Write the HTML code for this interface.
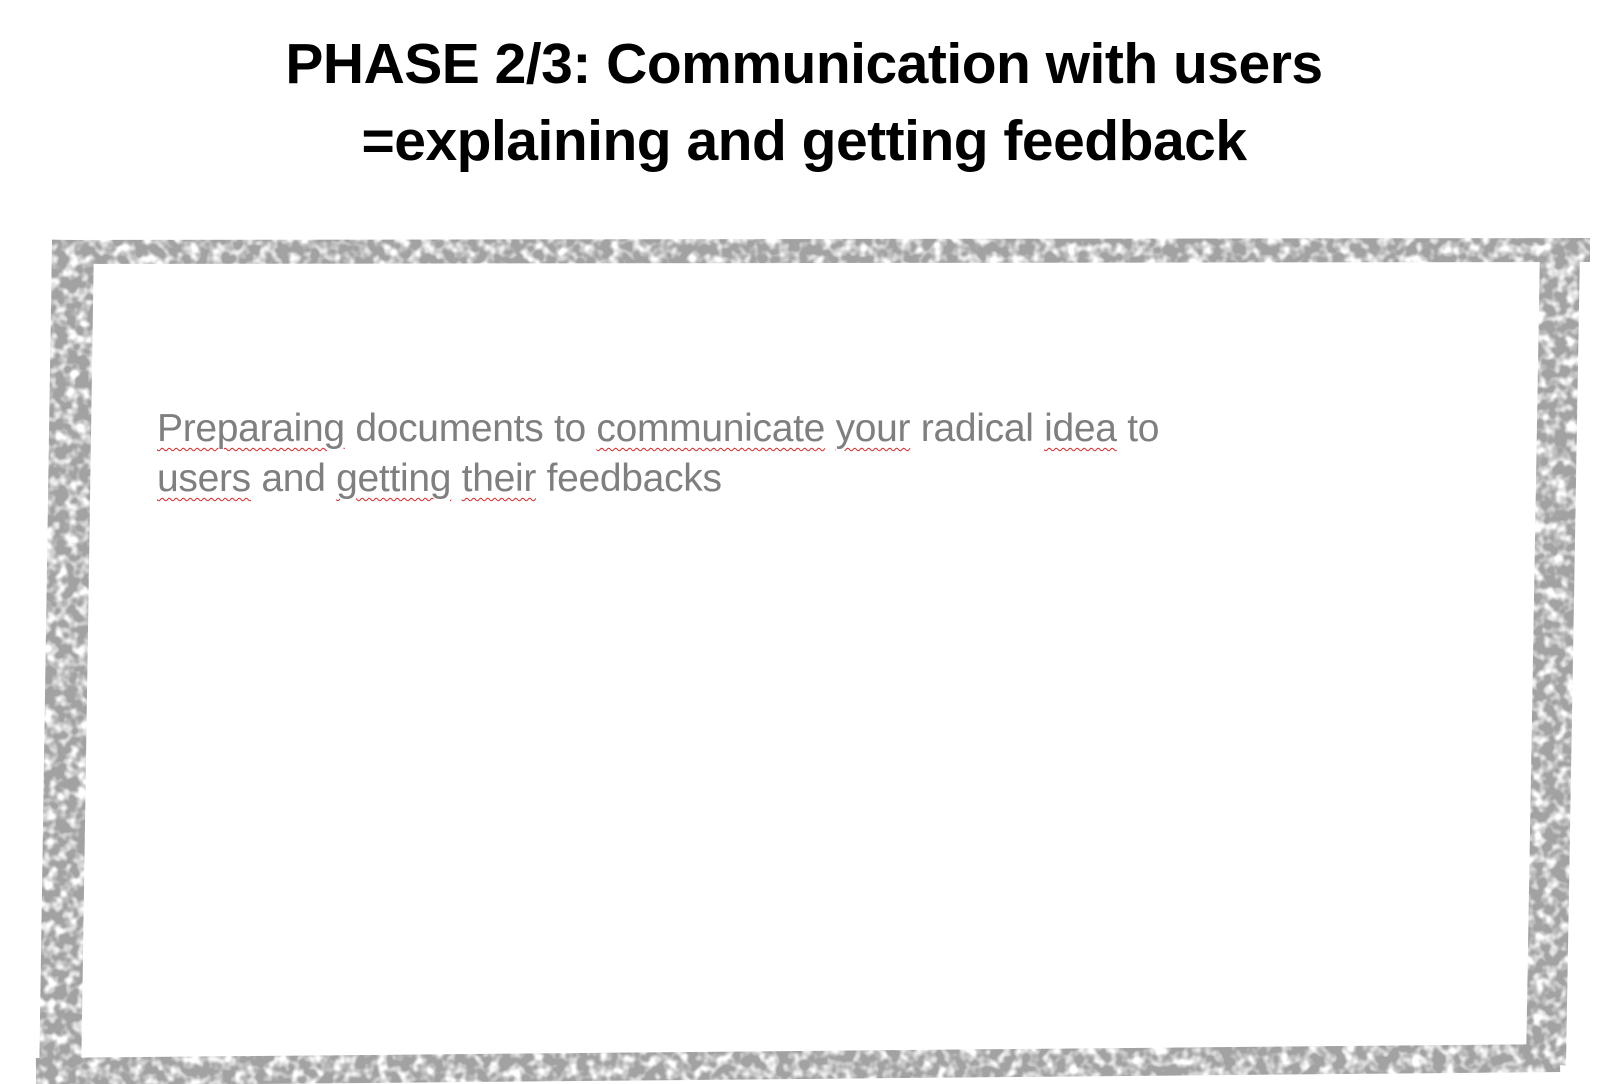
<!DOCTYPE html>
<html><head><meta charset="utf-8"><style>
html,body{margin:0;padding:0;background:#fff;width:1608px;height:1084px;overflow:hidden;position:relative}
.t{position:absolute;left:0;width:1608px;text-align:center;font-family:"Liberation Sans",sans-serif;font-weight:bold;font-size:57px;color:#000;letter-spacing:-0.5px;white-space:nowrap}
.b{position:absolute;left:157px;font-family:"Liberation Sans",sans-serif;font-size:39px;color:#7f7f7f;white-space:nowrap;letter-spacing:-0.3px}
.w{text-decoration:underline wavy #e02020;text-decoration-thickness:1px;text-underline-offset:6px}
svg{position:absolute;left:0;top:0}
</style></head><body>
<svg width="1608" height="1084">
<defs>
<filter id="r" x="-5%" y="-5%" width="110%" height="110%">
<feTurbulence type="fractalNoise" baseFrequency="0.09" numOctaves="2" seed="3" result="n"/>
<feColorMatrix in="n" type="matrix" values="0 0 0 0 1  0 0 0 0 1  0 0 0 0 1  0 0 0 -3 1.75" result="m"/>
<feComposite in="SourceGraphic" in2="m" operator="out"/>
</filter>
</defs>
<g filter="url(#r)" fill="none" stroke="#a2a2a2" stroke-linejoin="miter">
<path d="M60 252 L1590 250" stroke-width="24"/>
<path d="M1560 248 L1546 1065" stroke-width="40"/>
<path d="M1560 1058 L36 1072" stroke-width="28"/>
<path d="M73 240 L60 1084" stroke-width="42"/>
</g>
</svg>
<div class="t" style="top:26px;line-height:77px">PHASE 2/3: Communication with users</div>
<div class="t" style="top:103px;line-height:77px">=explaining and getting feedback</div>
<div class="b" style="top:404px;line-height:50px"><span class="w">Preparaing</span> documents to <span class="w">communicate</span> <span class="w">your</span> radical <span class="w">idea</span> to<br><span class="w">users</span> and <span class="w">getting</span> <span class="w">their</span> feedbacks</div>
</body></html>
